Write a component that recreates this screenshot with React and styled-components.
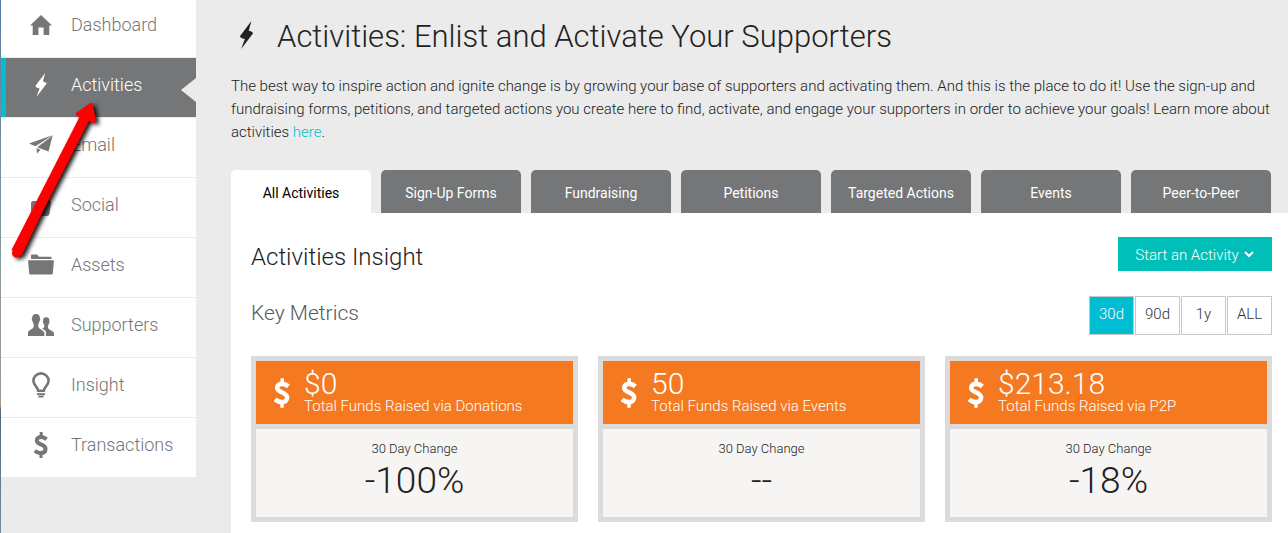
import React, { useState } from 'react';
import styled, { createGlobalStyle } from 'styled-components';


//------------- Styling -------------//

const GlobalStyle = createGlobalStyle`
    * {
        box-sizing: border-box;
    }
    body {
        margin: 0;
        background-color: #ebebeb;
        color: #222222;
        font-family: Roboto, "Open Sans", sans-serif;
        font-weight: 300;
    }
    h1, h2, h3, p, ul {
        margin: 0;
        padding: 0;
        font-weight: 300;
    }
    button {
        font-family: inherit;
        border: none;
        padding: 0;
        cursor: pointer;
    }
`;

const Page = styled.div`
    position: relative;
    display: flex;
    min-height: 100vh;
    overflow: hidden;
`;

const PageEdge = styled.div`
    flex: 0 0 1px;
    background: linear-gradient(#5b7ba5 0%, #8a9a9c 50%, #a09a90 76%, #4f6a7e 77%, #6f8f9c 100%);
`;

const Sidebar = styled.nav`
    flex: 0 0 195px;
    margin-top: -2px;
    ul {
        list-style: none;
        background-color: #ffffff;
    }
    li + li {
        border-top: 1px solid #ebebeb;
    }
`;

const NavLink = styled.a`
    position: relative;
    display: flex;
    align-items: center;
    height: 59px;
    padding-bottom: 6px;
    border-left: 5px solid ${props => props.$active ? '#00bfcf' : 'transparent'};
    background-color: ${props => props.$active ? '#747678' : '#ffffff'};
    color: ${props => props.$active ? '#ffffff' : '#747678'};
    font-size: 18px;
    text-decoration: none;
    .icon {
        display: flex;
        justify-content: center;
        width: 30px;
        margin: 0 15px 0 20px;
    }
    &::after {
        content: '';
        display: ${props => props.$active ? 'block' : 'none'};
        position: absolute;
        right: 0;
        top: 20px;
        border: 12px solid transparent;
        border-right: 15px solid #ebebeb;
        border-left: none;
    }
`;

const Main = styled.main`
    flex: 1;
    min-width: 0;
    display: flex;
    flex-direction: column;
    padding-left: 35px;
`;

const PageHeader = styled.header`
    padding: 16px 17px 0 0;
    .title {
        display: flex;
        align-items: flex-start;
        gap: 23px;
        padding-left: 8px;
    }
    .title svg {
        margin-top: 5px;
    }
    h1 {
        font-size: 31px;
        line-height: 42px;
    }
    p {
        margin-top: 17px;
        font-size: 15px;
        line-height: 23px;
    }
    a {
        color: #00bfcf;
        text-decoration: none;
    }
`;

const Tabs = styled.div`
    display: grid;
    grid-template-columns: repeat(7, 1fr);
    gap: 10px;
    margin: 26px 17px 0 0;
`;

const Tab = styled.button`
    height: 43px;
    padding-top: 3px;
    border-radius: 5px 5px 0 0;
    background-color: ${props => props.$active ? '#ffffff' : '#747678'};
    color: ${props => props.$active ? '#000000' : '#ffffff'};
    font-size: 14px;
    font-weight: 400;
`;

const Panel = styled.section`
    flex: 1;
    padding: 24px 16px 11px 20px;
    background-color: #ffffff;
`;

const PanelRow = styled.div`
    display: flex;
    justify-content: space-between;
    align-items: flex-start;
    h2 {
        font-size: 24px;
        line-height: 40px;
    }
    h3 {
        margin-top: 18px;
        color: #58595b;
        font-size: 21px;
        line-height: 36px;
    }
`;

const StartButton = styled.button`
    display: flex;
    align-items: center;
    justify-content: center;
    gap: 4px;
    width: 154px;
    height: 34px;
    padding-top: 2px;
    background-color: #00bfb8;
    color: #ffffff;
    font-size: 15px;
    font-weight: 300;
`;

const Ranges = styled.div`
    display: flex;
    gap: 1px;
    margin: 19px 0 21px;
`;

const Range = styled.button`
    width: 45px;
    height: 39px;
    padding-bottom: 3px;
    border: 1px solid #c8c8c8;
    background-color: ${props => props.$active ? '#00bdd3' : '#ffffff'};
    color: ${props => props.$active ? '#ffffff' : '#333333'};
    font-size: 15px;
    font-weight: 300;
`;

const Cards = styled.div`
    display: grid;
    grid-template-columns: repeat(3, 1fr);
    gap: 20px;
`;

const Card = styled.article`
    display: grid;
    gap: 5px;
    padding: 5px;
    background-color: #dcdbd9;
`;

const CardTop = styled.div`
    display: flex;
    align-items: center;
    gap: 14px;
    height: 63px;
    padding-left: 18px;
    background-color: #f57921;
    color: #ffffff;
`;

const Amount = styled.p`
    font-size: 30px;
    line-height: 28px;
`;

const AmountLabel = styled.p`
    font-size: 15px;
    line-height: 17px;
`;

const CardChange = styled.div`
    height: 88px;
    padding-top: 11px;
    background-color: #f7f5f4;
    text-align: center;
    .label {
        font-size: 13px;
        line-height: 18px;
    }
    .value {
        font-size: 37px;
        line-height: 46px;
    }
`;

const Pointer = styled.svg`
    position: absolute;
    left: 0;
    top: 90px;
    pointer-events: none;
    filter: drop-shadow(3px 2px 2px rgba(0, 0, 0, 0.9));
`;


//------------- Icons -------------//

const HomeIcon = () => (
    <svg width="22" height="20" viewBox="0 0 22 20" fill="currentColor" aria-hidden="true">
        <path d="M11 0 22 10.6H19.3V20H13.6V12.6H8.4V20H2.7V10.6H0Z" />
    </svg>
);

const BoltIcon = ({ width = 12, height = 24 }) => (
    <svg width={width} height={height} viewBox="0 0 12 24" fill="currentColor" aria-hidden="true">
        <path d="M10.2 0 7.9 8.4Q11.8 9.4 11.5 10.8L1.4 24 4.6 15.4Q.2 14.6.5 12.8Z" />
    </svg>
);

const PlaneIcon = () => (
    <svg width="24" height="19" viewBox="0 0 24 19" fill="currentColor" aria-hidden="true">
        <path d="M23.6.2 0 8.4 6.4 11.2ZM23.7.5 8.2 12.2 19.5 16.5ZM7.6 13 11.5 14.7 8 18.6Z" />
    </svg>
);

const SocialIcon = () => (
    <svg width="20" height="22" viewBox="0 0 20 22" fill="currentColor" aria-hidden="true">
        <path d="M0 8.5Q.4 7 2 7H6L12 5.5H15.5Q20 5.5 20 9L18.4 20Q18 22 16 22H9L4 18H0Z" />
    </svg>
);

const FolderIcon = () => (
    <svg width="26" height="21" viewBox="0 0 26 21" fill="currentColor" aria-hidden="true">
        <path d="M3 4V1.4Q3 .5 4 .5H9L11 2.8H22.5Q23.6 2.8 23.6 4V5H3ZM.8 6.3H25.2Q26 6.3 25.9 7.2L24.8 19.4Q24.6 20.5 23.6 20.5H2.4Q1.4 20.5 1.2 19.4L.1 7.2Q0 6.3.8 6.3Z" />
    </svg>
);

const PeopleIcon = () => (
    <svg width="26" height="22" viewBox="0 0 26 22" fill="currentColor" aria-hidden="true">
        <path d="M8 0C10.8 0 12 1.8 11.9 4.6 12.5 5 12.2 6.7 11.5 7.1 11.2 9 10.2 10.2 10.2 11.4 10.2 15.6 15.6 15.2 16.4 19V22H0V18.2C1.2 15 5.8 15.6 5.8 11.4 5.8 10.2 4.8 9 4.5 7.1 3.8 6.7 3.5 5 4.1 4.6 4 1.8 5.2 0 8 0Z" />
        <path d="M18.2 3.2C20.6 3.2 21.5 4.8 21.3 7.1 21.8 7.6 21.6 8.8 21 9.3 20.7 10.8 19.9 11.6 19.9 12.8 19.9 16.4 24.8 16.2 26 19V22H18V18.2C17.5 16.2 15.8 15.4 14 14.5 15.8 13.9 16.5 13.5 16.4 12.6 16.4 11.4 15.8 10.8 15.4 9.3 14.8 8.8 14.6 7.6 15.1 7.1 14.9 4.8 15.8 3.2 18.2 3.2Z" />
    </svg>
);

const BulbIcon = () => (
    <svg width="18" height="26" viewBox="0 0 18 26" fill="none" stroke="currentColor" strokeWidth="2.6" aria-hidden="true">
        <path d="M6.2 18.8C6 15 1.4 13.4 1.4 8.8A7.6 7.4 0 0 1 16.6 8.8C16.6 13.4 12 15 11.8 18.8Z" />
        <path d="M5 22.2H13" strokeWidth="2" />
        <path d="M6.4 24.6H11.6" strokeWidth="1.8" />
    </svg>
);

const DollarIcon = ({ width = 14, height = 26 }) => (
    <svg width={width} height={height} viewBox="0 0 14 26" fill="none" stroke="currentColor" strokeWidth="4" aria-hidden="true">
        <path d="M12.6 7.2C10.8 5.7 9 5 7.2 5 4.6 5 2.8 6.2 2.8 8.4 2.8 13.2 11.5 11.6 11.5 17 11.5 19.6 9.6 21 7 21 4.6 21 2.7 20.3.9 18.6" />
        <path d="M7.2 0V4M7 22V26" strokeWidth="3" />
    </svg>
);

const CaretIcon = () => (
    <svg width="12" height="8" viewBox="0 0 12 8" fill="none" stroke="currentColor" strokeWidth="2" aria-hidden="true">
        <path d="M2 1 6 5 10 1" />
    </svg>
);


//------------- Data -------------//

const navItems = [
    { label: 'Dashboard', Icon: HomeIcon },
    { label: 'Activities', Icon: BoltIcon },
    { label: 'Email', Icon: PlaneIcon },
    { label: 'Social', Icon: SocialIcon },
    { label: 'Assets', Icon: FolderIcon },
    { label: 'Supporters', Icon: PeopleIcon },
    { label: 'Insight', Icon: BulbIcon },
    { label: 'Transactions', Icon: DollarIcon },
];

const tabs = ['All Activities', 'Sign-Up Forms', 'Fundraising', 'Petitions', 'Targeted Actions', 'Events', 'Peer-to-Peer'];

const ranges = ['30d', '90d', '1y', 'ALL'];

const metrics = [
    { amount: '$0', label: 'Total Funds Raised via Donations', change: '-100%' },
    { amount: '50', label: 'Total Funds Raised via Events', change: '--' },
    { amount: '$213.18', label: 'Total Funds Raised via P2P', change: '-18%' },
];


//------------- Components -------------//

function MetricCard({ amount, label, change }) {
    return (
        <Card>
            <CardTop>
                <DollarIcon width={16} height={30} />
                <div>
                    <Amount>{amount}</Amount>
                    <AmountLabel>{label}</AmountLabel>
                </div>
            </CardTop>
            <CardChange>
                <p className="label">30 Day Change</p>
                <p className="value">{change}</p>
            </CardChange>
        </Card>
    );
}

export default function App() {
    const [tab, setTab] = useState('All Activities');
    const [range, setRange] = useState('30d');

    return (
        <Page>
            <GlobalStyle />
            <PageEdge />
            <Sidebar>
                <ul>
                    {navItems.map(({ label, Icon }) => (
                        <li key={label}>
                            <NavLink href="#" $active={label === 'Activities'}>
                                <span className="icon"><Icon /></span>
                                {label}
                            </NavLink>
                        </li>
                    ))}
                </ul>
            </Sidebar>
            <Main>
                <PageHeader>
                    <div className="title">
                        <BoltIcon width={15} height={28} />
                        <h1>Activities: Enlist and Activate Your Supporters</h1>
                    </div>
                    <p>
                        The best way to inspire action and ignite change is by growing your base of supporters and activating them. And this is the place to do it! Use the sign-up and fundraising forms, petitions, and targeted actions you create here to find, activate, and engage your supporters in order to achieve your goals! Learn more about activities <a href="#">here</a>.
                    </p>
                </PageHeader>
                <Tabs role="tablist">
                    {tabs.map(name => (
                        <Tab key={name} role="tab" aria-selected={tab === name} $active={tab === name} onClick={() => setTab(name)}>{name}</Tab>
                    ))}
                </Tabs>
                <Panel>
                    <PanelRow>
                        <h2>Activities Insight</h2>
                        <StartButton>Start an Activity <CaretIcon /></StartButton>
                    </PanelRow>
                    <PanelRow>
                        <h3>Key Metrics</h3>
                        <Ranges>
                            {ranges.map(name => (
                                <Range key={name} aria-pressed={range === name} $active={range === name} onClick={() => setRange(name)}>{name}</Range>
                            ))}
                        </Ranges>
                    </PanelRow>
                    <Cards>
                        {metrics.map(metric => <MetricCard key={metric.label} {...metric} />)}
                    </Cards>
                </Panel>
            </Main>
            <Pointer width="110" height="180" viewBox="0 90 110 180" aria-hidden="true">
                <path d="M16.5 253 87 115" stroke="#ff0000" strokeWidth="9" strokeLinecap="round" />
                <path d="M11.5 250 82 112 88 116 21.5 256Z" fill="#ff0000" />
                <path d="M91 105 78 114 94 121Z" fill="#ff0000" stroke="#ff0000" strokeWidth="4" strokeLinejoin="round" />
            </Pointer>
        </Page>
    );
}
